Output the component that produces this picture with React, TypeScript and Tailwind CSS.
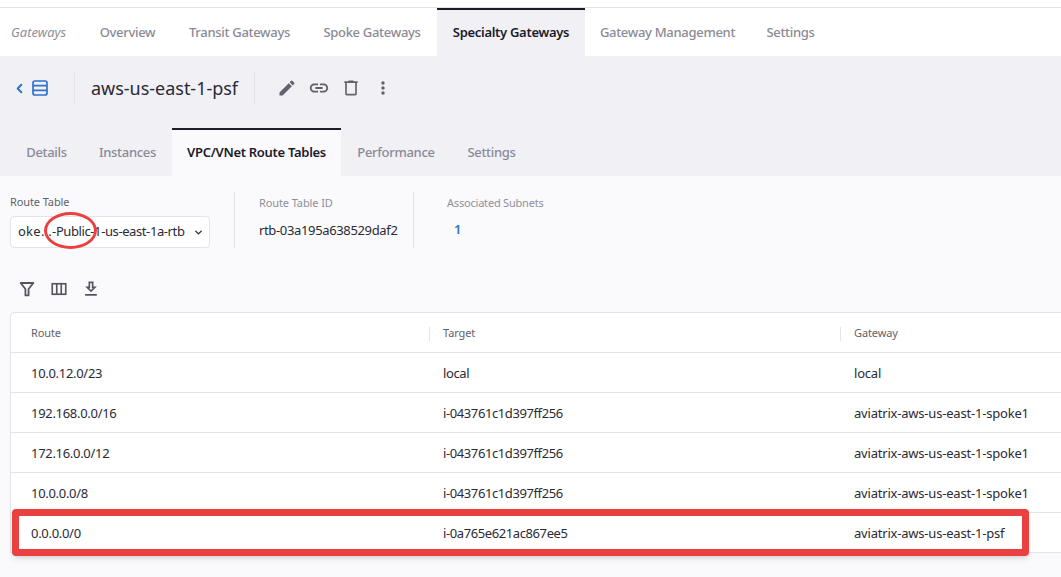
import { ChevronDown, ChevronLeft } from 'lucide-react'
import { MdEdit, MdLink, MdMoreVert } from 'react-icons/md'

const topTabs = [
  { label: 'Overview', width: 'w-[89px]' },
  { label: 'Transit Gateways', width: 'w-[135px]' },
  { label: 'Spoke Gateways', width: 'w-[130px]' },
  { label: 'Specialty Gateways', width: 'w-[148px]' },
  { label: 'Gateway Management', width: 'w-[165px]' },
  { label: 'Settings', width: 'w-[81px]' },
]
const subTabs = [
  { label: 'Details', width: 'w-[73px]' },
  { label: 'Instances', width: 'w-[89px]' },
  { label: 'VPC/VNet Route Tables', width: 'w-[169px]' },
  { label: 'Performance', width: 'w-[110px]' },
  { label: 'Settings', width: 'w-[81px]' },
]

const routes = [
  { route: '10.0.12.0/23', target: 'local', gateway: 'local' },
  { route: '192.168.0.0/16', target: 'i-043761c1d397ff256', gateway: 'aviatrix-aws-us-east-1-spoke1' },
  { route: '172.16.0.0/12', target: 'i-043761c1d397ff256', gateway: 'aviatrix-aws-us-east-1-spoke1' },
  { route: '10.0.0.0/8', target: 'i-043761c1d397ff256', gateway: 'aviatrix-aws-us-east-1-spoke1' },
  { route: '0.0.0.0/0', target: 'i-0a765e621ac867ee5', gateway: 'aviatrix-aws-us-east-1-psf' },
]

function Tab({ label, width, active, bg }: { label: string; width: string; active: boolean; bg: string }) {
  return (
    <div
      className={`flex h-12 items-center justify-center border-t-2 text-[13px] tracking-[-0.3px] whitespace-nowrap ${width} ${
        active ? `border-[#1c1b2b] font-semibold text-[#1c1b2b] ${bg}` : 'border-transparent font-medium text-[#8a8a96]'
      }`}
    >
      {label}
    </div>
  )
}

export default function App() {
  return (
    <div className="relative h-[577px] w-[1061px] overflow-hidden bg-[#fafafc] font-['Noto_Sans',sans-serif] text-[#2a2a35]">
      <div className="h-2 border-b border-[#e3e3e8] bg-white" />
      <div className="flex h-12 items-start bg-white">
        <div className="flex h-12 w-[83px] items-center pt-px pl-[11px] text-[13px] text-[#8f8f99] italic">Gateways</div>
        {topTabs.map((t) => (
          <Tab key={t.label} label={t.label} width={t.width} active={t.label === 'Specialty Gateways'} bg="bg-[#f0f0f5]" />
        ))}
      </div>

      <div className="h-[120px] bg-[#f0f0f5]">
        <div className="flex h-12 items-center pt-4">
          <div className="flex h-8 w-[75px] items-center border-r border-[#e3e3e8] pl-3">
            <ChevronLeft className="h-[15px] w-[15px] text-[#2f72c9]" strokeWidth={3} />
            <svg className="ml-[5px] h-4 w-4" viewBox="0 0 16 16" fill="none" stroke="#2f72c9" strokeWidth="1.7">
              <rect x="1" y="1" width="14" height="14" rx="2" />
              <path d="M1 5.7h14M1 10.3h14" />
            </svg>
          </div>
          <div className="flex h-8 w-[180px] items-center border-r border-[#e3e3e8] pl-4 text-[18px] tracking-[-0.02px] text-[#2a2a35]">
            aws-us-east-1-psf
          </div>
          <div className="flex items-center pl-4 text-[#62626c]">
            <div className="flex h-8 w-8 items-center justify-center"><MdEdit className="h-5 w-5" /></div>
            <div className="flex h-8 w-8 items-center justify-center"><MdLink className="h-[22px] w-[22px]" /></div>
            <div className="flex h-8 w-8 items-center justify-center">
              <svg className="h-5 w-5" viewBox="0 0 24 24" fill="currentColor" fillRule="evenodd">
                <path d="M9,3V4H4V6H5V19A2,2 0 0,0 7,21H17A2,2 0 0,0 19,19V6H20V4H15V3H9M7,6H17V19H7V6Z" />
              </svg>
            </div>
            <div className="flex h-8 w-8 items-center justify-center"><MdMoreVert className="h-5 w-5" /></div>
          </div>
        </div>
        <div className="mt-6 flex pl-2.5">
          {subTabs.map((t) => (
            <Tab key={t.label} label={t.label} width={t.width} active={t.label === 'VPC/VNet Route Tables'} bg="bg-[#fafafc]" />
          ))}
        </div>
      </div>

      <div className="flex pt-4 pl-2.5">
        <div className="w-[200px]">
          <div className="h-6 text-[11px] leading-5 tracking-[-0.1px] text-[#62626c]">Route Table</div>
          <div className="flex h-8 items-center justify-between rounded border border-[#e3e3e8] bg-white pr-[5px] pl-[7px] text-[13px] text-[#2a2a35]">
            <span className="whitespace-nowrap">
              <span className="tracking-[0.25px]">oke...</span>
              <span className="tracking-[-0.4px]">-Public-1-us-east-1a-rtb</span>
            </span>
            <ChevronDown className="h-[11px] w-[11px]" strokeWidth={3} />
          </div>
        </div>
        <div className="ml-6 h-14 w-[179px] border-l border-[#e3e3e8] pl-6">
          <div className="h-7 pt-px text-[11px] leading-5 tracking-[-0.1px] text-[#8f8f99]">Route Table ID</div>
          <div className="text-[13px] leading-5 tracking-[-0.35px]">rtb-03a195a638529daf2</div>
        </div>
        <div className="h-14 border-l border-[#e3e3e8] pl-[33px]">
          <div className="h-7 pt-px text-[11px] leading-5 tracking-[-0.2px] text-[#8f8f99]">Associated Subnets</div>
          <div className="-mt-px pl-[7px] text-[13px] leading-5 font-semibold text-[#2f72c9]">1</div>
        </div>
      </div>

      <div className="mt-[31px] flex items-center pl-[11px] text-[#55555f]">
        <div className="flex h-5 w-8 items-center justify-center">
          <svg className="h-[18px] w-[18px]" viewBox="0 0 24 24" fill="none" stroke="currentColor" strokeWidth="2.4" strokeLinejoin="round">
            <path d="M3.5 4h17l-6.4 8v8.5h-4.2V12z" />
          </svg>
        </div>
        <div className="flex h-5 w-8 items-center justify-center">
          <svg className="h-[18px] w-[18px]" viewBox="0 0 24 24" fill="none" stroke="currentColor" strokeWidth="2.2">
            <rect x="3" y="5" width="18" height="14" />
            <path d="M9 5v14M15 5v14" />
          </svg>
        </div>
        <div className="flex h-5 w-8 items-center justify-center">
          <svg className="h-5 w-5" viewBox="0 0 24 24" fill="currentColor">
            <path d="M13,5V11H14.17L12,13.17L9.83,11H11V5H13M15,3H9V9H5L12,16L19,9H15V3M19,18H5V20H19V18Z" />
          </svg>
        </div>
      </div>

      <div className="mt-[13px] ml-2.5 w-[1100px] rounded-t border border-[#e3e3e8] bg-white">
        <div className="grid h-[39px] grid-cols-[412px_411px_1fr] items-center pt-px pl-5 text-[11px] tracking-[-0.1px] text-[#62626c]">
          <div>Route</div>
          <div className="relative">Target<span className="absolute top-0.5 -left-3.5 h-3.5 border-l border-[#e3e3e8]" /></div>
          <div className="relative">Gateway<span className="absolute top-0.5 -left-3.5 h-3.5 border-l border-[#e3e3e8]" /></div>
        </div>
        {routes.map((r) => (
          <div
            key={r.route}
            className="grid h-10 grid-cols-[412px_411px_1fr] items-center border-t border-[#e3e3e8] pt-[3px] pl-5 text-[13px] text-[#2a2a35]"
          >
            <div className="tracking-[-0.3px]">{r.route}</div>
            <div className="tracking-[-0.4px]">{r.target}</div>
            <div className="tracking-[-0.2px]">{r.gateway}</div>
          </div>
        ))}
      </div>

      {/* red annotations drawn over the screenshot */}
      <div className="absolute top-[509px] left-3 h-[47px] w-[1017px] rounded border-[7px] border-[#ea4040] shadow-md" />
      <div className="absolute top-[212px] left-[44px] h-[37px] w-[53px] rounded-[50%] border-[3px] border-[#ea4040]" />
    </div>
  )
}
